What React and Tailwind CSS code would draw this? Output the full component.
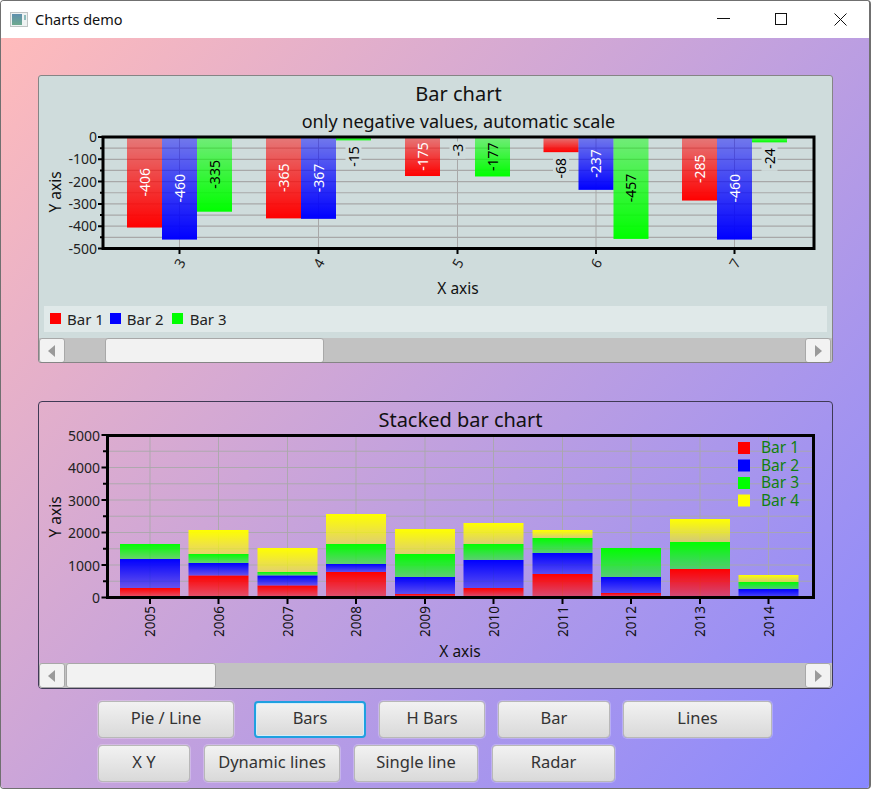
const barsOne = [
    { at: 179.5, values: [-406, -460, -335] },
    { at: 318.5, values: [-365, -367, -15] },
    { at: 457.5, values: [-175, -3, -177] },
    { at: 596, values: [-68, -237, -457] },
    { at: 734.5, values: [-285, -460, -24] },
];

const stacked = [
    { year: 2005, at: 150, tops: [588, 559, 544, null] },
    { year: 2006, at: 218.5, tops: [575.5, 563, 554, 530] },
    { year: 2007, at: 287.5, tops: [585.5, 575.5, 572, 548] },
    { year: 2008, at: 356, tops: [572, 564, 544, 514] },
    { year: 2009, at: 425, tops: [594, 577, 554, 529] },
    { year: 2010, at: 493.5, tops: [588, 560, 544, 523] },
    { year: 2011, at: 562.5, tops: [574, 553, 538, 530] },
    { year: 2012, at: 631, tops: [593, 577, 548, null] },
    { year: 2013, at: 700, tops: [569, null, 542, 519] },
    { year: 2014, at: 768.5, tops: [null, 589, 582, 575] },
];

const colours = ["#ff0000", "#0000ff", "#00ff00", "#ffff00"];
const grid = "#a8a8a8";

function Gradients() {
    return (
        <defs>
            {colours.map((c, i) => (
                <linearGradient key={c} id={`up${i}`} x1="0" y1="0" x2="0" y2="1">
                    <stop offset="0" stopColor={c} stopOpacity="0.45" />
                    <stop offset="1" stopColor={c} />
                </linearGradient>
            ))}
            {colours.map((c, i) => (
                <linearGradient key={c} id={`down${i}`} x1="0" y1="0" x2="0" y2="1">
                    <stop offset="0" stopColor={c} />
                    <stop offset="1" stopColor={c} stopOpacity="0.5" />
                </linearGradient>
            ))}
        </defs>
    );
}

function BarChart() {
    const y0 = 137;
    const scale = 111.5 / 500;
    const lines = [];
    for (let v = 0; v <= 500; v += 50) lines.push(v);
    return (
        <svg width="793" height="175" viewBox="39 131 793 175" className="block overflow-visible">
            <Gradients />
            {lines.map((v) => (
                <line key={v} x1="104" x2="813" y1={y0 + v * scale} y2={y0 + v * scale} stroke={grid} strokeWidth="1.2" />
            ))}
            {barsOne.map((g) => (
                <line key={g.at} x1={g.at} x2={g.at} y1="137" y2="249" stroke={grid} />
            ))}
            {barsOne.map((g) =>
                g.values.map((v, i) => {
                    const x = g.at - 52.5 + i * 35;
                    const h = -v * scale;
                    const big = h > 30;
                    const cx = x + 17.5;
                    const cy = big ? y0 + h / 2 : y0 + h + (String(v).length * 7.4) / 2 + 5;
                    const len = String(v).length * 7.6;
                    return (
                        <g key={i}>
                            <rect x={x} y={y0} width="35" height={h} fill={`url(#up${i})`} />
                            {!big && <rect x={cx - 8} y={cy - len / 2 - 1} width="16" height={len + 2} fill="#cfdcdc" />}
                            <text
                                x={cx}
                                y={cy}
                                transform={`rotate(-90 ${cx} ${cy})`}
                                textAnchor="middle"
                                dominantBaseline="central"
                                fontSize="14"
                                fill={big && i < 2 ? "#ffffff" : "#000000"}
                            >
                                {v}
                            </text>
                        </g>
                    );
                })
            )}
            {lines.map((v) => (
                <line key={v} x1={v % 100 === 0 ? 98 : 100} x2="103" y1={y0 + v * scale} y2={y0 + v * scale} stroke="#000" strokeWidth="2" />
            ))}
            {[0, 100, 200, 300, 400, 500].map((v) => (
                <text key={v} x="97" y={y0 - 0.5 + v * scale} textAnchor="end" dominantBaseline="central" fontSize="14" fill="#222">
                    {v === 0 ? "0" : `-${v}`}
                </text>
            ))}
            <rect x="103" y="137" width="711" height="111.5" fill="none" stroke="#000" strokeWidth="3" />
            {barsOne.map((g, i) => (
                <g key={g.at}>
                    <line x1={g.at} x2={g.at} y1="249" y2="254" stroke="#000" strokeWidth="2" />
                    <text x={g.at} y="263" transform={`rotate(-60 ${g.at} 263)`} textAnchor="middle" dominantBaseline="central" fontSize="14" fill="#222">
                        {i + 3}
                    </text>
                </g>
            ))}
            <text x="458" y="287.5" textAnchor="middle" dominantBaseline="central" fontSize="15.5" fill="#111">X axis</text>
            <text x="55" y="192" transform="rotate(-90 55 192)" textAnchor="middle" dominantBaseline="central" fontSize="15.5" fill="#111">Y axis</text>
        </svg>
    );
}

function StackedChart() {
    const base = 597;
    const rows = [];
    for (let i = 0; i <= 10; i++) rows.push(597.5 - i * 16.25);
    return (
        <svg width="793" height="231" viewBox="39 432 793 231" className="block overflow-visible">
            <Gradients />
            {rows.map((y) => (
                <line key={y} x1="108" x2="813" y1={y} y2={y} stroke={grid} strokeOpacity="0.85" strokeWidth="1.2" />
            ))}
            {stacked.map((s) => (
                <line key={s.year} x1={s.at} x2={s.at} y1="436" y2="597" stroke={grid} strokeOpacity="0.85" />
            ))}
            {stacked.map((s) => {
                let bottom = base;
                return s.tops.map((top, i) => {
                    if (top === null) return null;
                    const r = <rect key={i} x={s.at - 30} y={top} width="60" height={bottom - top} fill={`url(#down${i})`} />;
                    bottom = top;
                    return r;
                });
            })}
            {rows.map((y, i) => (
                <line key={y} x1={i % 2 === 0 ? 101.5 : 103} x2="107" y1={y} y2={y} stroke="#000" strokeWidth="2" />
            ))}
            {[0, 1000, 2000, 3000, 4000, 5000].map((v, i) => (
                <text key={v} x="100" y={597.5 - i * 32.5} textAnchor="end" dominantBaseline="central" fontSize="14" fill="#222">
                    {v}
                </text>
            ))}
            <rect x="107.5" y="435.5" width="706" height="162" fill="none" stroke="#000" strokeWidth="3" />
            {colours.map((c, i) => (
                <g key={c}>
                    <rect x="738" y={442 + i * 17.5} width="12" height="12" fill={c} />
                    <text x="761" y={447 + i * 17.5} dominantBaseline="central" fontSize="15.5" fill="#108010">
                        Bar {i + 1}
                    </text>
                </g>
            ))}
            {stacked.map((s) => (
                <g key={s.year}>
                    <line x1={s.at} x2={s.at} y1="598" y2="604" stroke="#000" strokeWidth="2" />
                    <text x={s.at} y="606" transform={`rotate(-90 ${s.at} 606)`} textAnchor="end" dominantBaseline="central" fontSize="13.5" fill="#111">
                        {s.year}
                    </text>
                </g>
            ))}
            <text x="460" y="650.5" textAnchor="middle" dominantBaseline="central" fontSize="15.5" fill="#111">X axis</text>
            <text x="55" y="517" transform="rotate(-90 55 517)" textAnchor="middle" dominantBaseline="central" fontSize="15.5" fill="#111">Y axis</text>
        </svg>
    );
}

function ScrollButton({ dir }) {
    return (
        <div className="flex h-full w-[26px] flex-none items-center justify-center rounded-[3px] border border-[#a8a8a8] bg-[#f2f2f2]">
            <svg width="8" height="12" viewBox="0 0 8 12">
                <path d={dir === "left" ? "M7 0v12L0 6z" : "M1 0v12l7-6z"} fill="#9a9a9a" />
            </svg>
        </div>
    );
}

function ScrollBar({ gap, thumb }) {
    return (
        <div className="flex h-[25px] items-stretch bg-[#c2c2c2] pr-[1px]">
            <ScrollButton dir="left" />
            <div className={`h-full flex-none rounded-[3px] border border-[#a8a8a8] bg-[#f2f2f2] ${gap} ${thumb}`} />
            <div className="flex-1" />
            <ScrollButton dir="right" />
        </div>
    );
}

function Btn({ children, width, focused }) {
    return (
        <button
            className={`h-[37px] flex-none rounded-[4px] border bg-[linear-gradient(#f2f2f2,#d9d9d9)] pb-[2px] text-[16.5px] text-[#333] ${width} ${
                focused ? "border-2 border-[#1fa0e0] shadow-[inset_0_0_0_1px_#d4eefa]" : "border-[#b8b8b8] shadow-[0_0_0_1px_rgba(255,255,255,0.25)]"
            }`}
        >
            {children}
        </button>
    );
}

export default function App() {
    return (
        <div className="h-[789px] w-[871px] overflow-hidden bg-white font-['Noto_Sans',sans-serif]">
            <div className="flex h-[789px] w-[871px] flex-col overflow-hidden rounded-[4px] border-t border-r-2 border-b border-l border-[#707070]">
                <div className="flex h-[37px] flex-none items-center bg-white text-[14.5px] text-[#111]">
                    <svg width="18" height="15" viewBox="0 0 18 15" className="ml-[9px]">
                        <defs>
                            <linearGradient id="winIcon" x1="0" y1="0" x2="0" y2="1">
                                <stop offset="0" stopColor="#5f8fae" />
                                <stop offset="1" stopColor="#6eaa8e" />
                            </linearGradient>
                        </defs>
                        <rect x="0.5" y="0.5" width="17" height="14" fill="#eef2f2" stroke="#c0c4c4" />
                        <rect x="2" y="2" width="10" height="11" fill="url(#winIcon)" />
                        <rect x="14" y="3" width="2" height="5" fill="#8fbcbc" />
                    </svg>
                    <span className="ml-[7px]">Charts demo</span>
                    <div className="flex-1" />
                    <svg width="13" height="13" viewBox="0 0 13 13" className="mr-[45px]">
                        <path d="M0 5.5h13" stroke="#111" />
                    </svg>
                    <svg width="13" height="13" viewBox="0 0 13 13" className="mr-[46px]">
                        <rect x="0.5" y="0.5" width="11" height="11" fill="none" stroke="#111" />
                    </svg>
                    <svg width="13" height="13" viewBox="0 0 13 13" className="mr-[22px]">
                        <path d="M0.5 0.5l12 12M12.5 0.5l-12 12" stroke="#111" />
                    </svg>
                </div>
                <div className="flex-1 bg-[linear-gradient(131deg,#ffbbbb,#8888ff)] pt-[37px] pl-[37px]">
                    <div className="h-[288px] w-[795px] overflow-hidden rounded-[3px] border border-[#858585] bg-[#cfdcdc]">
                        <div className="h-[33px] pt-[1px] pl-[46px] text-center text-[20px] leading-[33px] text-[#111]">Bar chart</div>
                        <div className="h-[22px] pl-[46px] text-center text-[18px] leading-[24px] text-[#111]">only negative values, automatic scale</div>
                        <BarChart />
                        <div className="mx-[5px] flex h-[26px] items-center bg-[#e0e9e9] pb-[1px] text-[15px] leading-[24px] text-[#222]">
                            <span className="ml-[6px] h-[11px] w-[11px] bg-[#ff0000]" />
                            <span className="ml-[6px]">Bar 1</span>
                            <span className="ml-[6px] h-[11px] w-[11px] bg-[#0000ff]" />
                            <span className="ml-[6px]">Bar 2</span>
                            <span className="ml-[8px] h-[11px] w-[11px] bg-[#00ff00]" />
                            <span className="ml-[7px]">Bar 3</span>
                        </div>
                        <div className="mt-[6px]">
                            <ScrollBar gap="ml-[40px]" thumb="w-[219px]" />
                        </div>
                    </div>
                    <div className="mt-[38px] h-[288px] w-[795px] overflow-hidden rounded-[4px] border border-[#3f3a55]">
                        <div className="h-[30px] pt-[6px] pl-[50px] text-center text-[20px] leading-[24px] text-[#111]">Stacked bar chart</div>
                        <StackedChart />
                        <ScrollBar gap="ml-[1px]" thumb="w-[150px]" />
                    </div>
                    <div className="mt-[12px] ml-[60px] flex">
                        <Btn width="w-[136px]">Pie / Line</Btn>
                        <div className="ml-[20px]">
                            <Btn width="w-[112px]" focused>Bars</Btn>
                        </div>
                        <div className="ml-[13px]">
                            <Btn width="w-[106px]">H Bars</Btn>
                        </div>
                        <div className="ml-[13px]">
                            <Btn width="w-[112px]">Bar</Btn>
                        </div>
                        <div className="ml-[13px]">
                            <Btn width="w-[149px]">Lines</Btn>
                        </div>
                    </div>
                    <div className="mt-[7px] ml-[60px] flex gap-[14px]">
                        <Btn width="w-[92px]">X Y</Btn>
                        <Btn width="w-[136px]">Dynamic lines</Btn>
                        <Btn width="w-[124px]">Single line</Btn>
                        <Btn width="w-[123px]">Radar</Btn>
                    </div>
                </div>
            </div>
        </div>
    );
}
